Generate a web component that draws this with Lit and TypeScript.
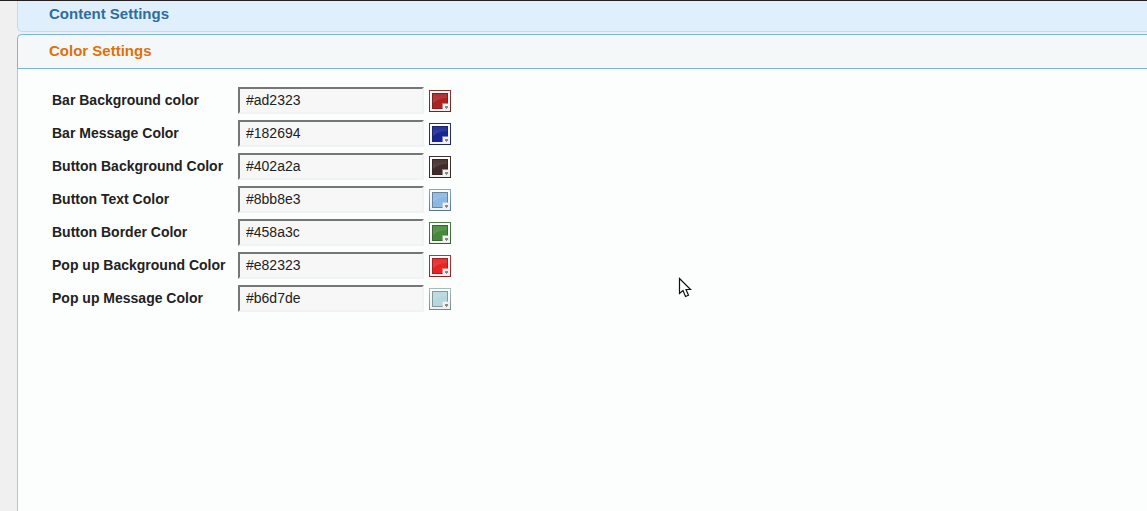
import { LitElement, html, css, svg } from "lit";
import { customElement, property } from "lit/decorators.js";

interface ColorSetting {
  id: string;
  label: string;
  value: string;
}

const SETTINGS: ColorSetting[] = [
  { id: "bar-background", label: "Bar Background color", value: "#ad2323" },
  { id: "bar-message", label: "Bar Message Color", value: "#182694" },
  { id: "button-background", label: "Button Background Color", value: "#402a2a" },
  { id: "button-text", label: "Button Text Color", value: "#8bb8e3" },
  { id: "button-border", label: "Button Border Color", value: "#458a3c" },
  { id: "popup-background", label: "Pop up Background Color", value: "#e82323" },
  { id: "popup-message", label: "Pop up Message Color", value: "#b6d7de" },
];

@customElement("color-swatch")
export class ColorSwatch extends LitElement {
  @property() color = "#000000";
  @property() name = "";

  static styles = css`
    :host {
      display: block;
      height: 22px;
    }
    .swatch {
      display: block;
      width: 22px;
      height: 22px;
      padding: 0;
      border: 0;
      background: none;
      cursor: pointer;
    }
    .icon {
      display: block;
    }
  `;

  render() {
    return html`
      <button class="swatch" type="button" aria-label="Choose ${this.name}">
        <svg class="icon" width="22" height="22" viewBox="0 0 22 22" aria-hidden="true">
          <defs>
            <linearGradient id="gloss" x1="0" y1="0" x2="0" y2="1">
              <stop offset="0" stop-color="#fff" stop-opacity=".06" />
              <stop offset="1" stop-color="#fff" stop-opacity=".15" />
            </linearGradient>
            <linearGradient id="edge" x1="0" y1="0" x2="0" y2="1">
              <stop offset="0" stop-color="#555" stop-opacity=".2" />
              <stop offset="1" stop-color="#222" stop-opacity=".45" />
            </linearGradient>
            <linearGradient id="paper" x1="0" y1="0" x2="0" y2="1">
              <stop offset="0" stop-color="#fff" />
              <stop offset="1" stop-color="#f0f0f0" />
            </linearGradient>
          </defs>
          ${svg`
            <rect width="22" height="22" fill=${this.color} />
            <rect width="22" height="22" fill="url(#edge)" />
            <rect x="1" y="1" width="20" height="20" fill="url(#paper)" />
            <rect x="3" y="3" width="16" height="16" fill=${this.color} />
            <path d="M3.5 3.5H18.5V18.5H3.5Z" fill="none" stroke="#222" stroke-opacity=".35" />
            <path d="M4 4H18V8C12 8 7 10 4 13Z" fill="url(#gloss)" />
            <rect x="14" y="14" width="7" height="7" fill="#f0f0f0" />
            <path d="M13.5 19V13.5H19" fill="none" stroke="#ddd" stroke-opacity=".5" />
            <path d="M16 16H19V18H18V19H17V18H16Z" fill="#888" />
          `}
        </svg>
      </button>
    `;
  }
}

@customElement("app-root")
export class AppRoot extends LitElement {
  static styles = css`
    :host {
      display: flex;
      flex-direction: column;
      box-sizing: border-box;
      min-height: 100vh;
      padding-left: 17px;
      border-top: 1px solid #231f20;
      background: #f0f0f0;
      overflow: hidden;
      color: #222;
      font-family: "Liberation Sans", Arial, sans-serif;
      font-size: 14px;
      line-height: 18px;
    }
    .heading {
      margin: 0;
      font-size: 15px;
      font-weight: bold;
    }
    .toggle {
      display: block;
      box-sizing: border-box;
      width: 100%;
      margin: 0;
      padding: 4px 31px 8px;
      border: solid #c5dbec;
      border-width: 0 0 1px 1px;
      border-radius: 0 0 0 5px;
      background: #dfeffc;
      color: #2e6e9e;
      font: inherit;
      text-align: left;
      cursor: pointer;
    }
    .closed {
      margin-bottom: 2px;
    }
    .open .toggle {
      padding: 7px 31px 8px;
      border-color: #79b7e7;
      border-width: 1px 0 1px 1px;
      border-radius: 5px 0 0 0;
      background: #f5f8f9;
      color: #e17009;
    }
    .panel {
      flex: 1;
      padding: 18px 34px;
      border-left: 1px solid #a6c9e2;
      background: #fcfefd;
    }
    .form {
      display: grid;
      grid-template-columns: 186px 186px 22px;
      align-items: center;
      row-gap: 6px;
    }
    .label {
      padding-bottom: 2px;
      font-weight: bold;
      white-space: nowrap;
    }
    .field {
      box-sizing: border-box;
      width: 100%;
      height: 27px;
      margin: 0;
      padding: 0 6px 2px;
      border: 2px solid;
      border-color: #767676 #f2f2f2 #f2f2f2 #767676;
      background: #f7f7f7;
      color: #222;
      font: inherit;
    }
    .picker {
      margin-left: 5px;
    }
    .pointer {
      position: absolute;
      left: 678px;
      top: 277px;
      pointer-events: none;
    }
  `;

  render() {
    return html`
      <h3 class="heading closed">
        <button class="toggle" type="button" aria-expanded="false">Content Settings</button>
      </h3>
      <h3 class="heading open">
        <button class="toggle" type="button" aria-expanded="true">Color Settings</button>
      </h3>
      <section class="panel">
        <form class="form">
          ${SETTINGS.map(
            (item) => html`
              <label class="label" for=${item.id}>${item.label}</label>
              <input class="field" id=${item.id} type="text" .value=${item.value} />
              <color-swatch class="picker" .color=${item.value} .name=${item.label}></color-swatch>
            `
          )}
        </form>
      </section>
      <svg class="pointer" width="15" height="22" viewBox="0 0 15 22" aria-hidden="true">
        <path
          d="M1.5 1.5V16.5L5 13.5L7.5 19.5L10.5 18.2L8 12.5H12.5Z"
          fill="#fff"
          stroke="#111"
          stroke-width="1.2"
        />
      </svg>
    `;
  }
}
